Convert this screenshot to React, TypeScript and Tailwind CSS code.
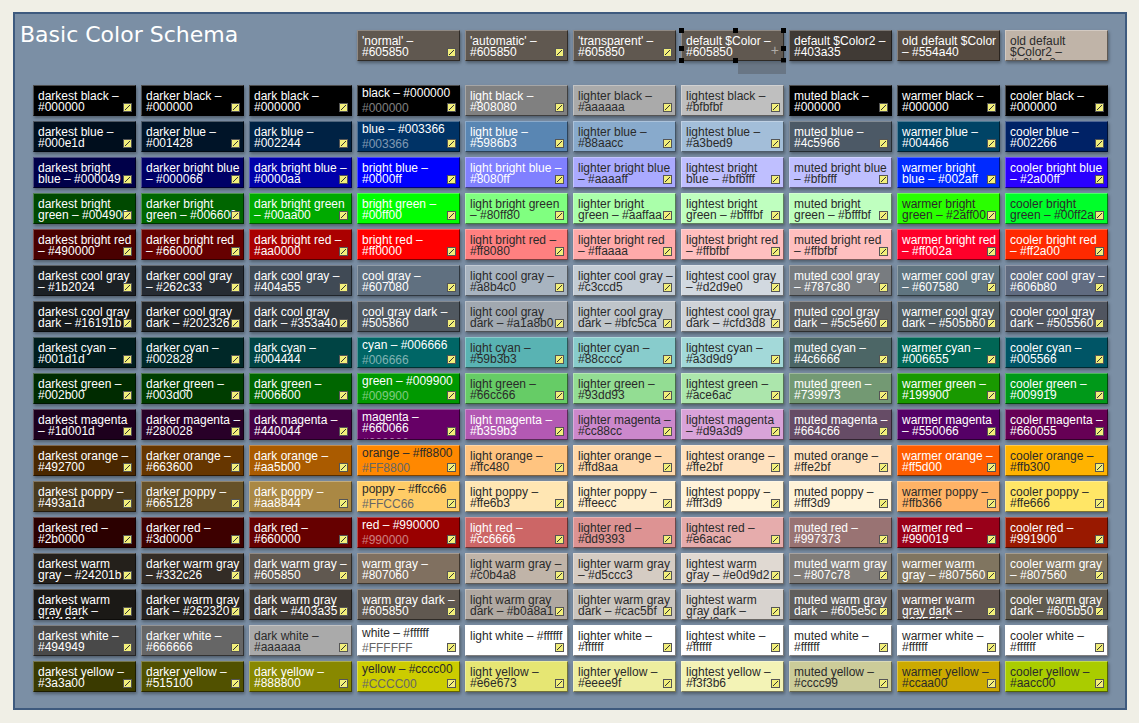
import React from 'react';

const mods = ['darkest', 'darker', 'dark', '', 'light', 'lighter', 'lightest', 'muted', 'warmer', 'cooler'];

const rows: [string, string[], string?][] = [
  ['black', ['000000', '000000', '000000', '000000', '808080', 'aaaaaa', 'bfbfbf', '000000', '000000', '000000'], '#000000'],
  ['blue', ['000e1d', '001428', '002244', '003366', '5986b3', '88aacc', 'a3bed9', '4c5966', '004466', '002266'], '#003366'],
  ['bright blue', ['000049', '000066', '0000aa', '0000ff', '8080ff', 'aaaaff', 'bfbfff', 'bfbfff', '002aff', '2a00ff']],
  ['bright green', ['004900', '006600', '00aa00', '00ff00', '80ff80', 'aaffaa', 'bfffbf', 'bfffbf', '2aff00', '00ff2a']],
  ['bright red', ['490000', '660000', 'aa0000', 'ff0000', 'ff8080', 'ffaaaa', 'ffbfbf', 'ffbfbf', 'ff002a', 'ff2a00']],
  ['cool gray', ['1b2024', '262c33', '404a55', '607080', 'a8b4c0', 'c3ccd5', 'd2d9e0', '787c80', '607580', '606b80']],
  ['cool gray dark', ['16191b', '202326', '353a40', '505860', 'a1a8b0', 'bfc5ca', 'cfd3d8', '5c5e60', '505b60', '505560']],
  ['cyan', ['001d1d', '002828', '004444', '006666', '59b3b3', '88cccc', 'a3d9d9', '4c6666', '006655', '005566'], '#006666'],
  ['green', ['002b00', '003d00', '006600', '009900', '66cc66', '93dd93', 'ace6ac', '739973', '199900', '009919'], '#009900'],
  ['magenta', ['1d001d', '280028', '440044', '660066', 'b359b3', 'cc88cc', 'd9a3d9', '664c66', '550066', '660055'], '#660066'],
  ['orange', ['492700', '663600', 'aa5b00', 'ff8800', 'ffc480', 'ffd8aa', 'ffe2bf', 'ffe2bf', 'ff5d00', 'ffb300'], '#FF8800'],
  ['poppy', ['493a1d', '665128', 'aa8844', 'ffcc66', 'ffe6b3', 'ffeecc', 'fff3d9', 'fff3d9', 'ffb366', 'ffe666'], '#FFCC66'],
  ['red', ['2b0000', '3d0000', '660000', '990000', 'cc6666', 'dd9393', 'e6acac', '997373', '990019', '991900'], '#990000'],
  ['warm gray', ['24201b', '332c26', '605850', '807060', 'c0b4a8', 'd5ccc3', 'e0d9d2', '807c78', '807560', '807560']],
  ['warm gray dark', ['1b1916', '262320', '403a35', '605850', 'b0a8a1', 'cac5bf', 'd8d3cf', '605e5c', '605550', '605b50']],
  ['white', ['494949', '666666', 'aaaaaa', 'ffffff', 'ffffff', 'ffffff', 'ffffff', 'ffffff', 'ffffff', 'ffffff'], '#FFFFFF'],
  ['yellow', ['3a3a00', '515100', '888800', 'cccc00', 'e6e673', 'eeee9f', 'f3f3b6', 'cccc99', 'ccaa00', 'aacc00'], '#CCCC00'],
];

const top: [string, string, boolean][] = [
  ["'normal' – #605850", '605850', true],
  ["'automatic' – #605850", '605850', true],
  ["'transparent' – #605850", '605850', true],
  ['default $Color – #605850', '605850', false],
  ['default $Color2 – #403a35', '403a35', false],
  ['old default $Color – #554a40', '554a40', false],
  ['old default $Color2 – #c0b4a8', 'c0b4a8', false],
];

function isLight(hex: string) {
  const r = parseInt(hex.slice(0, 2), 16), g = parseInt(hex.slice(2, 4), 16), b = parseInt(hex.slice(4, 6), 16);
  return 0.299 * r + 0.587 * g + 0.114 * b > 150;
}

const Corner = () => (
  <svg width="9" height="9" viewBox="0 0 9 9" className="absolute right-[3px] bottom-[3px]">
    <rect x="0.5" y="0.5" width="8" height="8" fill="#f2ef7a" stroke="#555" />
    <path d="M2 7 L7 2" stroke="#333" strokeWidth="1" />
  </svg>
);

const Tile = ({ label, hex, sub, corner = true, children }: { label: string; hex: string; sub?: string; corner?: boolean; children?: React.ReactNode }) => {
  const light = isLight(hex);
  return (
    <div
      className="relative h-[31px] border border-t-white/30 border-l-white/30 border-b-black/50 border-r-black/50 shadow-[1px_2px_3px_rgba(0,0,0,0.35)]"
      style={{ backgroundColor: '#' + hex }}
    >
      <div className={`h-full overflow-hidden pl-[4px] pr-[2px] text-[12px] leading-[11px] ${sub ? 'pt-[2px]' : 'pt-[5px]'} ${light ? 'text-[#2a2a2a]' : 'text-white'}`}>
        <div>{label}</div>
        {sub && <div className={`mt-[4px] ${light ? 'text-[#666]' : 'text-white/50'}`}>{sub}</div>}
      </div>
      {corner && <Corner />}
      {children}
    </div>
  );
};

const Handle = ({ c }: { c: string }) => <div className={`absolute w-[5px] h-[5px] bg-black ${c}`} />;

export default function App() {
  return (
    <div className="w-[1139px] h-[723px] bg-[#f0efe6] pt-[12px] pl-[13px]" style={{ fontFamily: '"Liberation Sans", Arial, sans-serif' }}>
      <div className="w-[1114px] h-[698px] bg-[#7b8fa5] border-2 border-[#3e5a7e] pt-[16px] pl-[18px]">
        <div className="grid grid-cols-[repeat(10,103px)] gap-x-[5px]">
          <div className="col-span-3 text-white text-[22px] leading-none -mt-[6px] -ml-[13px]" style={{ fontFamily: '"DejaVu Sans", sans-serif' }}>
            Basic Color Schema
          </div>
          {top.map(([l, h, c], i) => (
            <Tile key={i} label={l} hex={h} corner={c}>
              {i === 3 && (
                <>
                  <Handle c="-left-[3px] -top-[3px]" />
                  <Handle c="left-1/2 -top-[3px]" />
                  <Handle c="-right-[3px] -top-[3px]" />
                  <Handle c="-left-[3px] top-1/2" />
                  <Handle c="-right-[3px] top-1/2" />
                  <Handle c="-left-[3px] -bottom-[3px]" />
                  <Handle c="left-1/2 -bottom-[3px]" />
                  <Handle c="-right-[3px] -bottom-[3px]" />
                  <span className="absolute right-[4px] top-[12px] text-[14px] leading-none text-white/50">+</span>
                  <div className="absolute left-[56px] top-[31px] w-[48px] h-[12px] bg-[#5e6570]/60" />
                </>
              )}
            </Tile>
          ))}
        </div>
        <div className="grid grid-cols-[repeat(10,103px)] gap-x-[5px] gap-y-[5px] mt-[24px]">
          {rows.map(([name, hexes, sub]) =>
            hexes.map((h, i) => {
              const label = i === 3 ? `${name} – #${h}` : `${mods[i]} ${name} – #${h}`;
              return <Tile key={name + i} label={label} hex={h} sub={i === 3 ? sub : undefined} />;
            })
          )}
        </div>
      </div>
    </div>
  );
}
